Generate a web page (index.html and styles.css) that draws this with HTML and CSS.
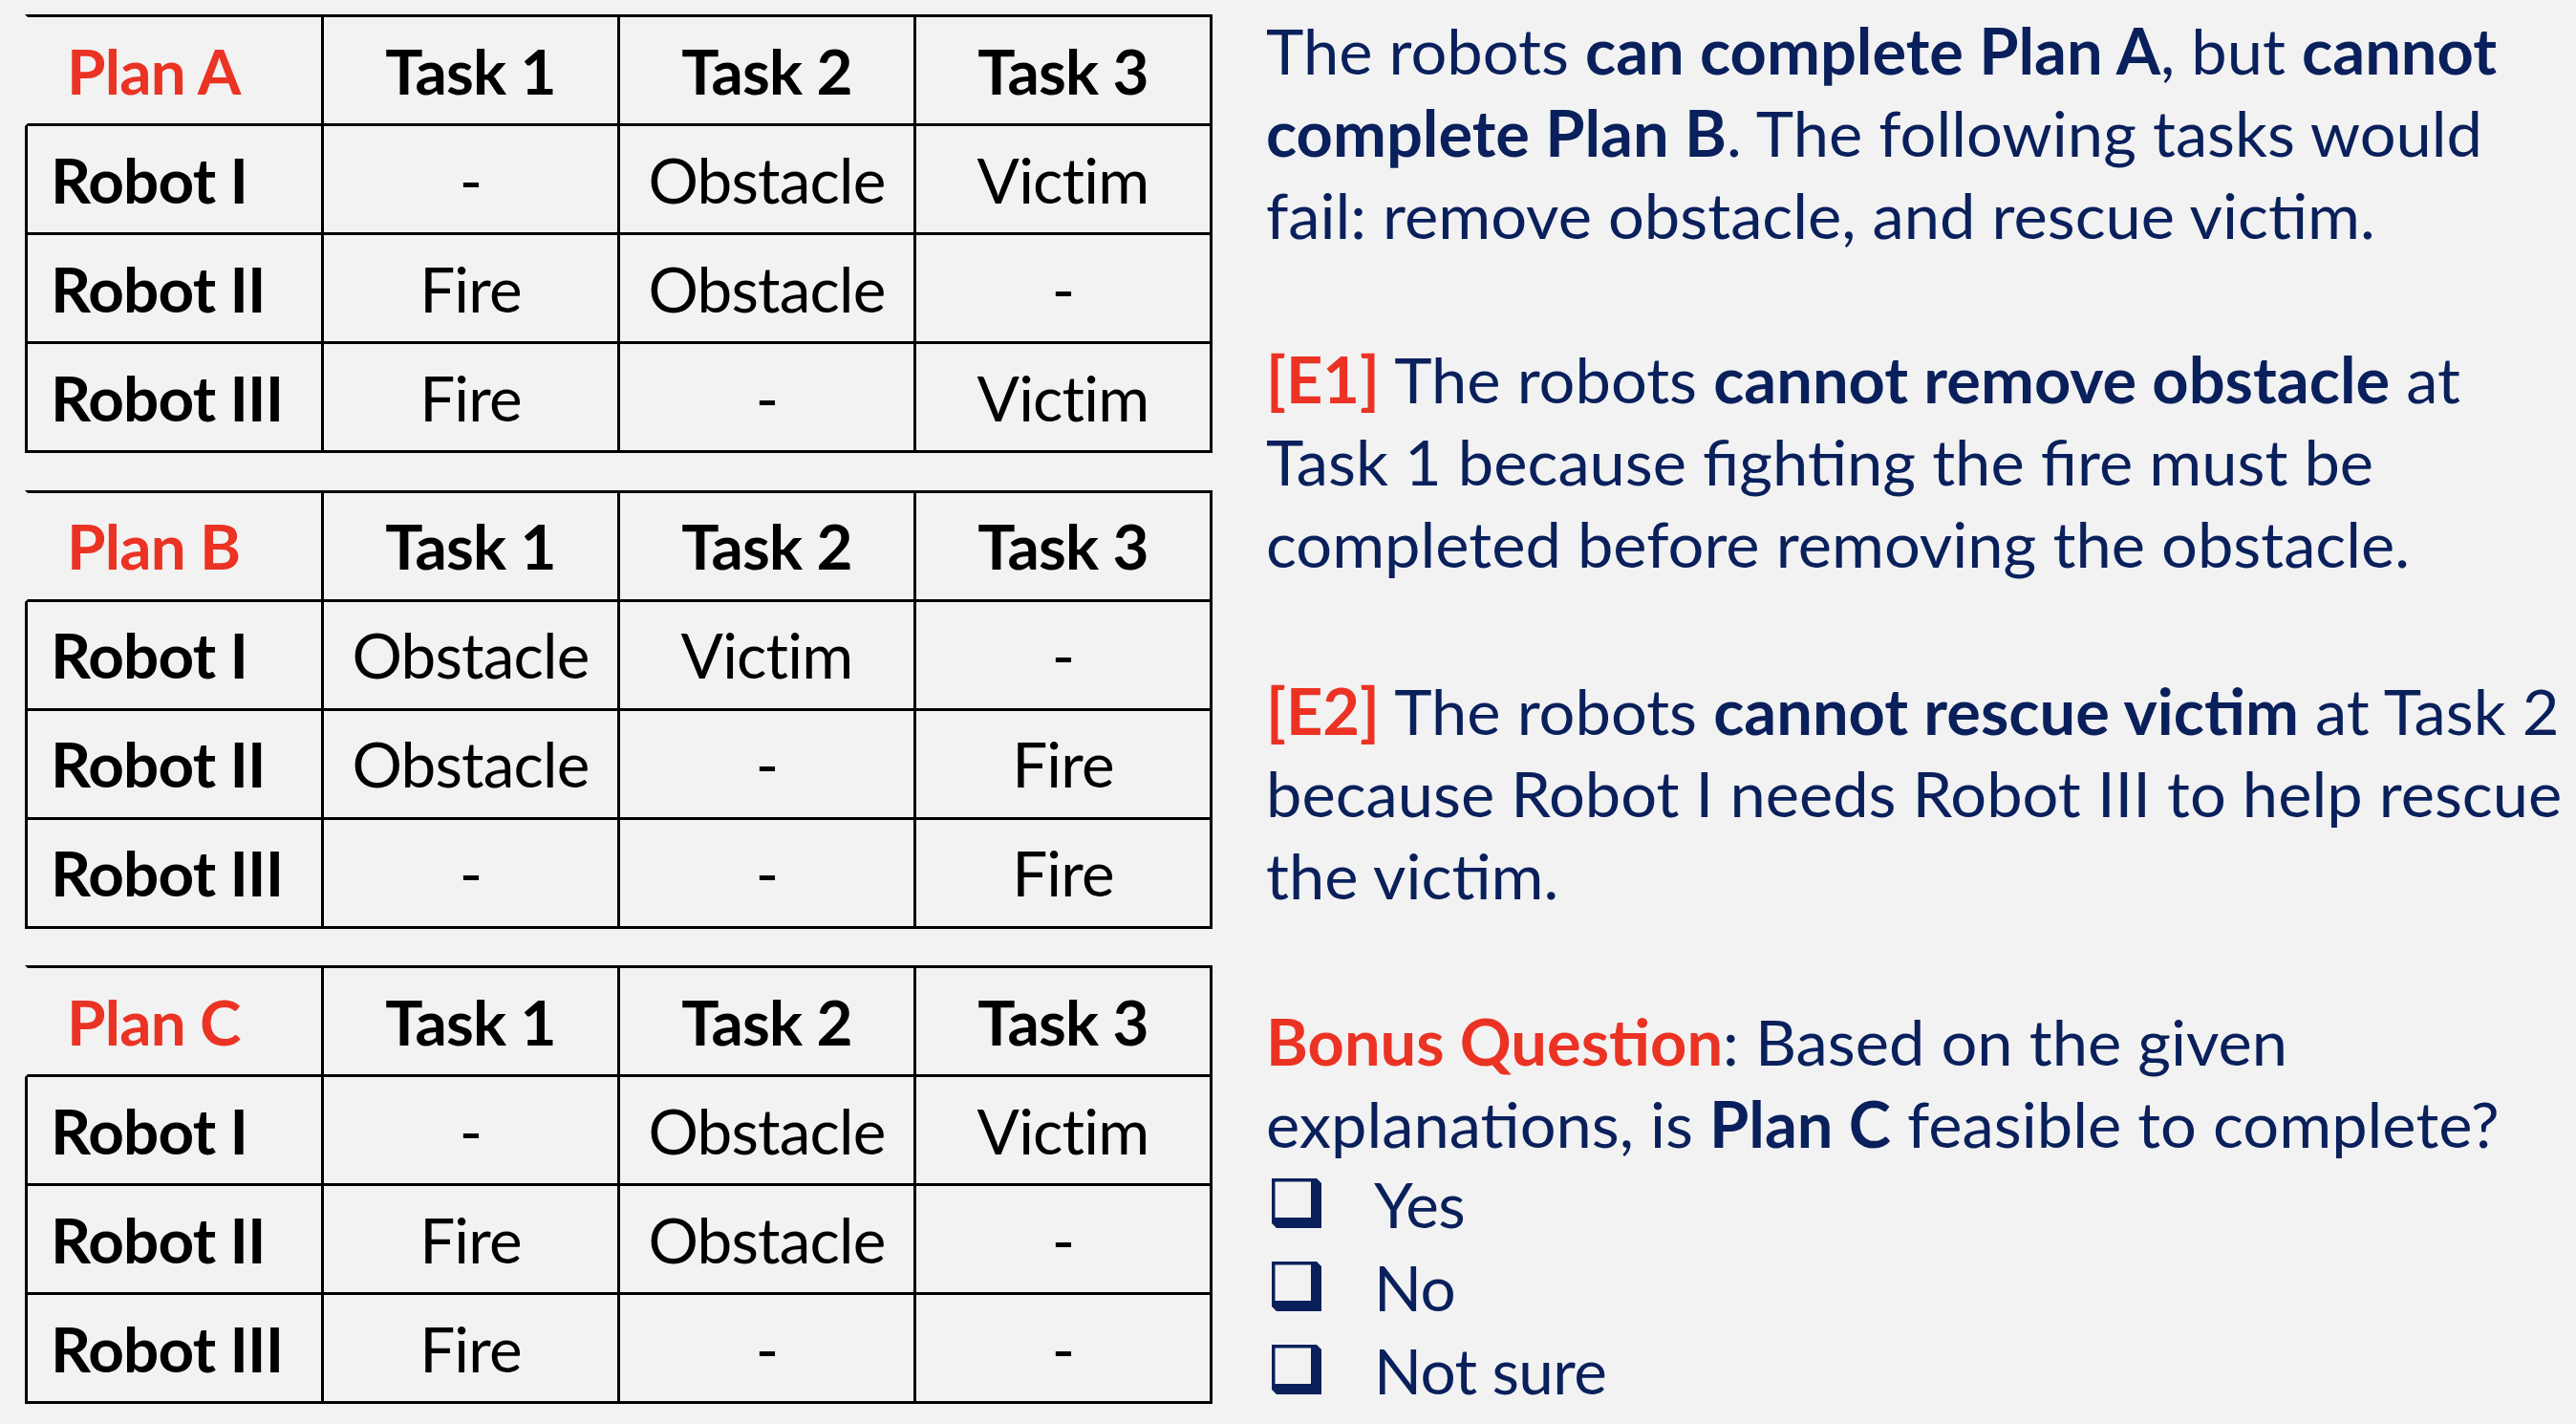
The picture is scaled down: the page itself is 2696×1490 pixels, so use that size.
FILE: index.html
```html
<!DOCTYPE html>
<html lang="en">
<head>
<meta charset="utf-8">
<title>Robot plans</title>
<link rel="stylesheet" href="styles.css">
</head>
<body>
<main class="slide">
  <section class="plans">
    <table class="plan">
      <tr><th class="corner">Plan A</th><th>Task 1</th><th>Task 2</th><th>Task 3</th></tr>
      <tr><th class="robot">Robot I</th><td>-</td><td>Obstacle</td><td>Victim</td></tr>
      <tr><th class="robot">Robot II</th><td>Fire</td><td>Obstacle</td><td>-</td></tr>
      <tr><th class="robot">Robot III</th><td>Fire</td><td>-</td><td>Victim</td></tr>
    </table>
    <table class="plan">
      <tr><th class="corner">Plan B</th><th>Task 1</th><th>Task 2</th><th>Task 3</th></tr>
      <tr><th class="robot">Robot I</th><td>Obstacle</td><td>Victim</td><td>-</td></tr>
      <tr><th class="robot">Robot II</th><td>Obstacle</td><td>-</td><td>Fire</td></tr>
      <tr><th class="robot">Robot III</th><td>-</td><td>-</td><td>Fire</td></tr>
    </table>
    <table class="plan">
      <tr><th class="corner">Plan C</th><th>Task 1</th><th>Task 2</th><th>Task 3</th></tr>
      <tr><th class="robot">Robot I</th><td>-</td><td>Obstacle</td><td>Victim</td></tr>
      <tr><th class="robot">Robot II</th><td>Fire</td><td>Obstacle</td><td>-</td></tr>
      <tr><th class="robot">Robot III</th><td>Fire</td><td>-</td><td>-</td></tr>
    </table>
  </section>
  <section class="explain">
    <p class="para p1">
      <span class="ln">The robots <b>can complete Plan A</b>, but <b>cannot</b></span>
      <span class="ln"><b>complete Plan B</b>. The following tasks would</span>
      <span class="ln">fail: remove obstacle, and rescue victim.</span>
    </p>
    <p class="para p2">
      <span class="ln"><b class="red">[E1]</b> The robots <b>cannot remove obstacle</b> at</span>
      <span class="ln">Task 1 because fighting the fire must be</span>
      <span class="ln">completed before removing the obstacle.</span>
    </p>
    <p class="para p3">
      <span class="ln"><b class="red">[E2]</b> The robots <b>cannot rescue victim</b> at Task 2</span>
      <span class="ln">because Robot I needs Robot III to help rescue</span>
      <span class="ln">the victim.</span>
    </p>
    <p class="para p4">
      <span class="ln"><b class="red">Bonus Question</b>: Based on the given</span>
      <span class="ln">explanations, is <b>Plan C</b> feasible to complete?</span>
    </p>
    <ul class="options">
      <li class="option"><svg class="box" viewBox="0 0 52 52" aria-hidden="true"><path d="M0 0H47L52 5V52H5L0 47Z M3.5 3.5V41H41V3.5Z" fill-rule="evenodd"/></svg><span class="ln">Yes</span></li>
      <li class="option"><svg class="box" viewBox="0 0 52 52" aria-hidden="true"><path d="M0 0H47L52 5V52H5L0 47Z M3.5 3.5V41H41V3.5Z" fill-rule="evenodd"/></svg><span class="ln">No</span></li>
      <li class="option"><svg class="box" viewBox="0 0 52 52" aria-hidden="true"><path d="M0 0H47L52 5V52H5L0 47Z M3.5 3.5V41H41V3.5Z" fill-rule="evenodd"/></svg><span class="ln">Not sure</span></li>
    </ul>
  </section>
</main>
</body>
</html>
```
FILE: styles.css
```css
html, body {
  margin: 0;
  padding: 0;
  background: #f2f2f2;
}

.slide {
  display: flex;
  align-items: flex-start;
  width: 2696px;
  height: 1490px;
  font-family: Lato, "Open Sans", sans-serif;
}

.plans {
  display: flex;
  flex-direction: column;
  gap: 38.5px;
  padding: 15px 0 0 26px;
}

.plan {
  border-collapse: separate;
  border-spacing: 0;
  table-layout: fixed;
  font-size: 65.6px;
  letter-spacing: -0.8px;
  color: #000;
}

.plan th,
.plan td {
  box-sizing: border-box;
  width: 310px;
  height: 114px;
  padding: 0;
  border-right: 3px solid #000;
  border-bottom: 3px solid #000;
  text-align: center;
  vertical-align: middle;
  white-space: nowrap;
  line-height: 1;
}

.plan th {
  font-weight: 700;
}

.plan td {
  font-weight: 400;
}

.plan tr:first-child th {
  height: 117px;
  border-top: 3px solid #000;
}

.plan th.corner {
  width: 313px;
  border-top-color: transparent;
  border-left: 3px solid transparent;
  text-align: left;
  padding-left: 41px;
  color: #eb3324;
}

.plan th.robot {
  width: 313px;
  border-left: 3px solid #000;
  text-align: left;
  padding-left: 24px;
}

.explain {
  padding: 9px 0 0 56px;
  color: #0a205c;
  font-size: 66.8px;
  line-height: 86px;
}

.para {
  margin: 0;
}

.p1 { margin-bottom: 86px; }
.p2 { margin-bottom: 89px; }
.p3 { margin-bottom: 87.6px; }

.ln {
  display: block;
  white-space: nowrap;
}

b {
  font-weight: 700;
}

.red {
  color: #eb3324;
}

.options {
  list-style: none;
  margin: -2px 0 0;
  padding: 0;
  font-size: 65.6px;
  letter-spacing: -0.6px;
  line-height: 87px;
}

.option {
  display: flex;
  align-items: baseline;
}

.box {
  width: 52px;
  height: 52px;
  margin-left: 6px;
  margin-right: 55px;
  fill: #0a205c;
  align-self: baseline;
}
```
